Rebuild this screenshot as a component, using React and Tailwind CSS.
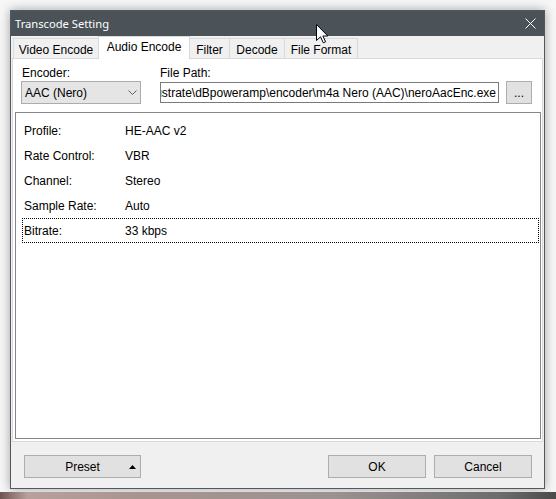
import React from "react";

const rows = [
  ["Profile:", "HE-AAC v2"],
  ["Rate Control:", "VBR"],
  ["Channel:", "Stereo"],
  ["Sample Rate:", "Auto"],
  ["Bitrate:", "33 kbps"],
];

function Tab({ label, w, selected, first }) {
  if (selected) {
    return (
      <div
        className={`relative z-10 -mb-px -ml-px flex h-[23px] items-start justify-center border-x border-t border-[#d9d9d9] bg-white pt-[3px] ${w}`}
      >
        <span className="leading-[14px]">{label}</span>
      </div>
    );
  }
  return (
    <div
      className={`flex h-[20px] items-start justify-center border-t border-r border-[#d9d9d9] bg-[#f0f0f0] pt-[4px] ${first ? "border-l" : ""} ${w}`}
    >
      <span className="leading-[14px]">{label}</span>
    </div>
  );
}

export default function App() {
  return (
    <div className="relative flex h-[499px] w-[556px] flex-col overflow-hidden bg-[#f7f7f7] font-['Liberation_Sans',Arial,sans-serif] text-[12px] text-black">
      <div className="ml-[10px] mt-[10px] flex h-[479px] w-[535px] flex-col border border-[#525a60] bg-[#f0f0f0] shadow-[0_0_10px_rgba(0,0,0,0.35)]">
        {/* Title bar */}
        <div className="flex h-[25px] items-center justify-between bg-[#4b5359] pl-[4px] pr-[8px] font-['Noto_Sans',sans-serif] text-[11.2px] text-white">
          <span className="leading-[16px]">Transcode Setting</span>
          <svg width="11" height="11" viewBox="0 0 11 11">
            <path d="M0.5 0.5 L10.5 10.5 M10.5 0.5 L0.5 10.5" stroke="#ffffff" strokeWidth="1" fill="none" />
          </svg>
        </div>

        {/* Tabs */}
        <div className="flex h-[22px] items-end pl-[2px]">
          <Tab label="Video Encode" w="w-[86px]" first />
          <Tab label="Audio Encode" w="w-[92px]" selected />
          <Tab label="Filter" w="w-[40px]" />
          <Tab label="Decode" w="w-[55px]" />
          <Tab label="File Format" w="w-[73px]" />
        </div>

        {/* Tab page */}
        <div className="ml-[1px] mr-[1px] flex h-[384px] flex-col border border-[#d9d9d9] bg-white">
          <div className="flex gap-[19px] pl-[8px] pr-[10px] pt-[7px]">
            <div className="flex w-[120px] flex-col gap-[1px]">
              <div className="h-[14px] pl-px leading-[14px]">Encoder:</div>
              <div className="flex h-[23px] items-center justify-between border border-[#acacac] bg-[#e5e5e5] pl-[3px] pr-[3px]">
                <span className="leading-[14px]">AAC (Nero)</span>
                <svg width="9" height="5" viewBox="0 0 9 5">
                  <polyline points="0.5,0.5 4.5,4.5 8.5,0.5" stroke="#606060" strokeWidth="1" fill="none" />
                </svg>
              </div>
            </div>
            <div className="flex min-w-0 flex-1 flex-col gap-[1px]">
              <div className="h-[14px] leading-[14px]">File Path:</div>
              <div className="flex h-[23px] items-center gap-[7px]">
                <div className="flex h-[21px] min-w-0 flex-1 items-center justify-end overflow-hidden whitespace-nowrap border border-[#7a7a7a] bg-white pr-[2px]">
                  <span className="shrink-0 leading-[14px]">
                    C:\Program Files (x86)\Illustrate\dBpoweramp\encoder\m4a Nero (AAC)\neroAacEnc.exe
                  </span>
                </div>
                <div className="flex h-[23px] w-[26px] items-center justify-center border border-[#adadad] bg-[#e1e1e1]">
                  <span className="leading-[14px]">...</span>
                </div>
              </div>
            </div>
          </div>

          <div className="ml-[2px] mr-px mt-[8px] h-[327px] border border-[#828790] bg-white pl-[6px] pr-px pt-[5px]">
            {rows.map(([k, v], i) => (
              <div
                key={k}
                className={`flex h-[25px] items-center border pl-px ${
                  i === rows.length - 1 ? "border-dotted border-black" : "border-transparent"
                }`}
              >
                <span className="w-[101px] leading-[14px]">{k}</span>
                <span className="leading-[14px]">{v}</span>
              </div>
            ))}
          </div>
        </div>

        {/* Bottom buttons */}
        <div className="mt-[13px] flex pl-[13px] pr-[12px]">
          <div className="relative flex h-[23px] w-[117px] items-center justify-center border border-[#adadad] bg-[#e1e1e1]">
            <span className="leading-[14px]">Preset</span>
            <svg className="absolute right-[4px] top-[9px]" width="7" height="4" viewBox="0 0 7 4">
              <polygon points="3.5,0 7,4 0,4" fill="#000000" />
            </svg>
          </div>
          <div className="ml-auto flex h-[23px] w-[98px] items-center justify-center border border-[#adadad] bg-[#e1e1e1]">
            <span className="leading-[14px]">OK</span>
          </div>
          <div className="ml-[8px] flex h-[23px] w-[98px] items-center justify-center border border-[#adadad] bg-[#e1e1e1]">
            <span className="leading-[14px]">Cancel</span>
          </div>
        </div>
      </div>

      {/* desktop strip */}
      <div className="mt-auto h-[7px] bg-[linear-gradient(to_right,#6e5552_0%,#b8a19c_5%,#a8948f_25%,#9b9291_60%,#6c6c6c_90%,#4a4a4a_100%)]" />

      {/* mouse cursor */}
      <svg className="absolute left-[316px] top-[24px]" width="13" height="20" viewBox="0 0 13 20">
        <path
          d="M0.5 0.5 L0.5 16.5 L4.5 12.8 L7.3 18.8 L9.6 17.8 L6.9 12 L11.8 12 Z"
          fill="#ffffff"
          stroke="#000000"
          strokeWidth="1"
          strokeLinejoin="miter"
        />
      </svg>
    </div>
  );
}
